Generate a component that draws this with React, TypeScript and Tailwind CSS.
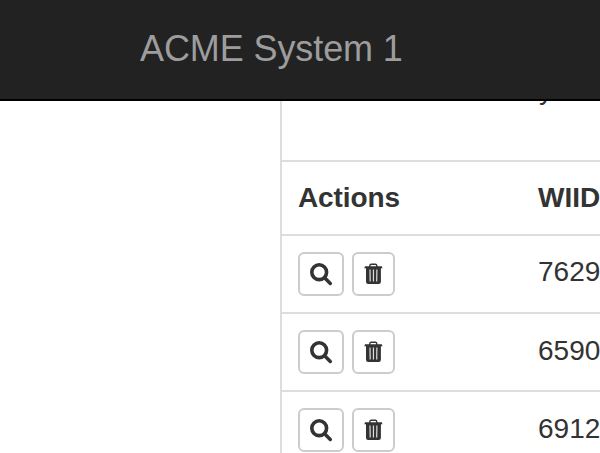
const Search = () => (
  <svg viewBox="0 0 24 24" className="h-6 w-6 shrink-0" fill="none" stroke="#333">
    <circle cx="10.2" cy="10.2" r="7.4" strokeWidth="3.6" />
    <path d="M15.6 15.700 L21.300 21.500" strokeWidth="3.5" strokeLinecap="round" />
  </svg>
);
const Trash = () => (
  <svg viewBox="0 0 21 22" className="h-[22px] w-[21px] shrink-0">
    <path
      d="M6.700 4V3Q6.900 1.200 8.200 1.200H12.400Q13.700 1.200 13.900 3V4"
      fill="none"
      stroke="#333"
      strokeWidth="1.4"
    />
    <path d="M2 3.200H18.800L19.500 5.200H1.300z" fill="#333" />
    <path
      d="M3 5H17.900V18.800Q17.900 21 15.700 21H5.200Q3 21 3 18.800z"
      fill="#333"
    />
    <path d="M7 6.500L7.200 18.500M10.450 6.500V18.500M13.900 6.500L13.700 18.500" stroke="#ddd" strokeWidth="1.2" />
  </svg>
);

const rows = [
  { id: "7629", leading: "leading-[40px]" },
  { id: "6590", leading: "leading-[42px]" },
  { id: "6912", leading: "leading-[42px]" },
];

export default function App() {
  return (
    <div className="h-[453px] w-[600px] overflow-hidden bg-white font-['Liberation_Sans',Arial,sans-serif] text-[28px] text-[#333]">
      <header className="h-[101px] border-b-2 border-black bg-[#222] pl-[140px] pt-[29px] text-[36px] leading-[40px] tracking-[-0.1px] text-[#9d9d9d]">
        ACME System 1
      </header>
      <main className="ml-[280px] h-[352px] w-[320px] overflow-hidden border-l-2 border-[#ddd]">
        <div className="h-[59px] overflow-hidden pl-[257px]">
          <div className="-mt-[27px] leading-[32px]">y</div>
        </div>
        <div className="flex h-[74px] border-t-2 border-[#ddd] pl-4 pt-4 font-bold leading-[40px] tracking-[-0.1px]">
          <div className="w-60 shrink-0">Actions</div>
          <div className="tracking-normal">WIID</div>
        </div>
        {rows.map(({ id, leading }) => (
          <div key={id} className="flex h-[78px] border-t-2 border-[#ddd] pl-4 pt-4">
            <div className="flex w-60 shrink-0 gap-2">
              <div className="flex h-11 w-[46px] items-center justify-center rounded-md border-2 border-[#ccc]">
                <Search />
              </div>
              <div className="flex h-11 w-[43px] items-center justify-center rounded-md border-2 border-[#ccc]">
                <Trash />
              </div>
            </div>
            <div className={leading}>{id}</div>
          </div>
        ))}
      </main>
    </div>
  );
}
